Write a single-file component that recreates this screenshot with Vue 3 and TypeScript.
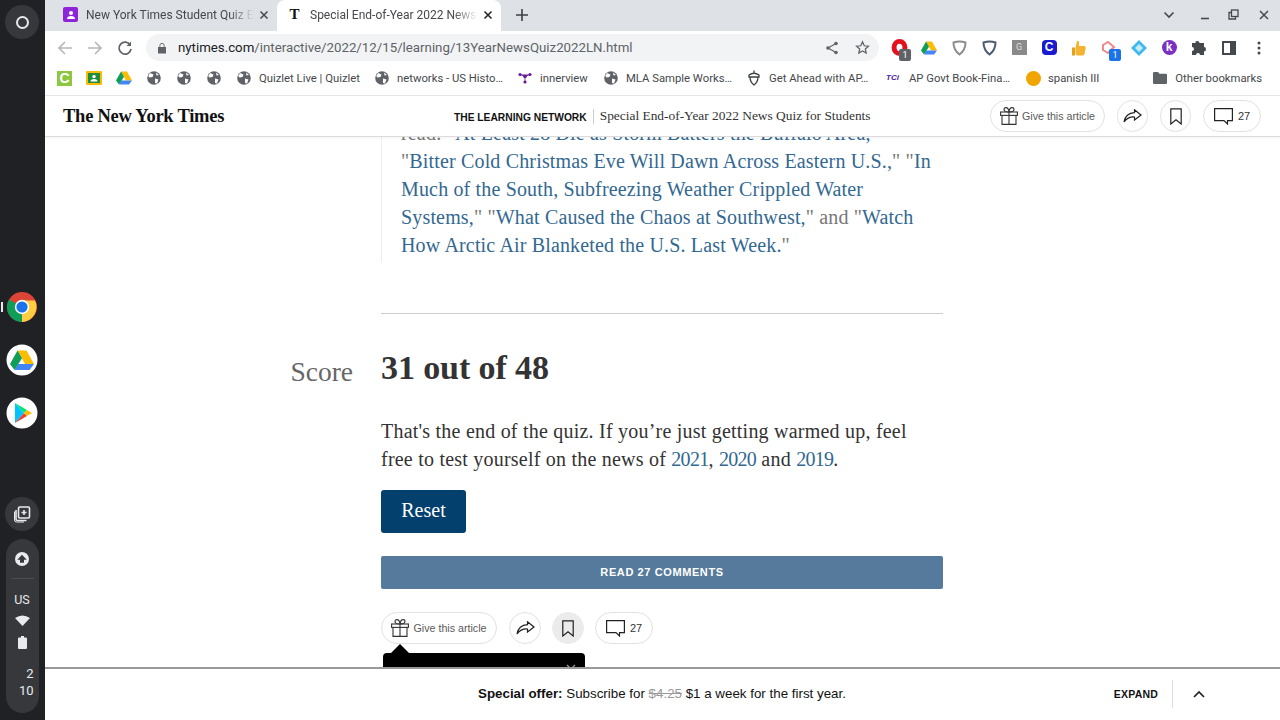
<script setup lang="ts">
const bookmarks = [
  { icon: 'quizlet' },
  { icon: 'classroom' },
  { icon: 'drive' },
  { icon: 'globe' },
  { icon: 'globe' },
  { icon: 'globe' },
  { icon: 'globe', label: 'Quizlet Live | Quizlet', width: 102 },
  { icon: 'globe', label: 'networks - US Histo…', width: 107 },
  { icon: 'dots', label: 'innerview', width: 50 },
  { icon: 'globe', label: 'MLA Sample Works…', width: 107 },
  { icon: 'acorn', label: 'Get Ahead with AP…', width: 104 },
  { icon: 'tci', label: 'AP Govt Book-Fina…', width: 104 },
  { icon: 'orange', label: 'spanish III', width: 52 },
]
</script>

<template>
  <div class="screen">
    <aside class="shelf">
      <div class="launcher"><span class="ring"></span></div>
      <div class="apps">
        <div class="app">
          <span class="running"></span>
          <svg width="32" height="32" viewBox="0 0 32 32">
            <circle cx="16" cy="16" r="15" fill="#db4437" />
            <path d="M3 8.5 A15 15 0 0 0 16 31 L16 16 Z" fill="#0f9d58" />
            <path d="M16 9.5 H29 A15 15 0 0 1 16 31 L16 16 Z" fill="#ffcd40" />
            <circle cx="16" cy="16" r="7.2" fill="#fff" />
            <circle cx="16" cy="16" r="5.6" fill="#1a73e8" />
          </svg>
        </div>
        <div class="app">
          <svg width="32" height="32" viewBox="0 0 32 32">
            <circle cx="16" cy="16" r="15.5" fill="#fff" />
            <path d="M11.5 6.5 H20.5 L28 20 H19 Z" fill="#fbbc04" />
            <path d="M12 20 H28 L23.5 26 H8.5 Z" fill="#4285f4" />
            <path d="M11.5 6.5 L16 14.3 L8.5 26 L4 20 Z" fill="#0f9d58" />
          </svg>
        </div>
        <div class="app">
          <svg width="32" height="32" viewBox="0 0 32 32">
            <circle cx="16" cy="16" r="15.5" fill="#fff" />
            <path d="M9 6 L18 16 L9 26 Z" fill="#00c3ff" />
            <path d="M9 6 L21 13 L18 16 Z" fill="#00e676" />
            <path d="M9 26 L21 19 L18 16 Z" fill="#ea4335" />
            <path d="M21 13 L26 16 L21 19 L18 16 Z" fill="#fbbc04" />
          </svg>
        </div>
      </div>
      <div class="capture">
        <svg width="18" height="18" viewBox="0 0 18 18" fill="none" stroke="#e8eaed" stroke-width="1.6">
          <rect x="5.5" y="2" width="11" height="11" rx="1.2" />
          <path d="M3 5 V14 Q3 15.5 4.5 15.5 H13.5 M11 5 V10 M8.5 7.5 H13.5" />
          <path d="M1.5 6.5 V15 Q1.5 17 3.5 17 H11" stroke-width="1" />
        </svg>
      </div>
      <div class="status">
        <span class="update">
          <svg width="10" height="10" viewBox="0 0 8 8"><path d="M4 .6 L7.8 4.6 H5.6 V7 H2.4 V4.6 H.2 Z" fill="#36383b" /></svg>
        </span>
        <span class="status-rule"></span>
        <span class="ime">US</span>
        <svg width="15" height="11" viewBox="0 0 15 11"><path d="M0 3 Q7.5 -2 15 3 L7.5 11 Z" fill="#e8eaed" /></svg>
        <svg class="battery" width="9" height="13" viewBox="0 0 9 13"><path d="M3 0 H6 V1.5 H8 Q9 1.5 9 2.5 V12 Q9 13 8 13 H1 Q0 13 0 12 V2.5 Q0 1.5 1 1.5 H3 Z" fill="#e8eaed" /></svg>
        <div class="clock"><span>2</span><span>10</span></div>
      </div>
    </aside>

    <div class="window">
      <div class="tabstrip">
        <div class="tab">
          <span class="fav-purple">
            <svg width="10" height="10" viewBox="0 0 10 10" fill="#fff"><circle cx="5" cy="3" r="2" /><path d="M1 9 Q1 6 5 6 Q9 6 9 9 Z" /></svg>
          </span>
          <span class="tab-title">New York Times Student Quiz Ends</span>
          <svg class="tab-close" width="10" height="10" viewBox="0 0 10 10"><path d="M1.5 1.5 L8.5 8.5 M8.5 1.5 L1.5 8.5" stroke="#45484c" stroke-width="1.5" /></svg>
        </div>
        <div class="tab active">
          <span class="fav-t">T</span>
          <span class="tab-title">Special End-of-Year 2022 News Quiz for</span>
          <svg class="tab-close" width="10" height="10" viewBox="0 0 10 10"><path d="M1.5 1.5 L8.5 8.5 M8.5 1.5 L1.5 8.5" stroke="#202124" stroke-width="1.5" /></svg>
        </div>
        <svg class="new-tab" width="12" height="12" viewBox="0 0 12 12"><path d="M6 0 V12 M0 6 H12" stroke="#3c4043" stroke-width="1.6" /></svg>
        <div class="window-controls">
          <svg width="12" height="8" viewBox="0 0 12 8" fill="none"><path d="M1.5 1.5 L6 6 L10.5 1.5" stroke="#45484c" stroke-width="1.6" /></svg>
          <svg class="wc-min" width="10" height="10" viewBox="0 0 10 10"><path d="M1 8.5 H9" stroke="#45484c" stroke-width="1.6" /></svg>
          <svg class="wc-restore" width="11" height="11" viewBox="0 0 11 11" fill="none" stroke="#45484c" stroke-width="1.3"><rect x="3.5" y="1" width="6.5" height="6.5" /><path d="M3.5 3.5 H1 V10 H7.5 V7.5" /></svg>
          <svg class="wc-close" width="10" height="10" viewBox="0 0 10 10"><path d="M1 1 L9 9 M9 1 L1 9" stroke="#45484c" stroke-width="1.5" /></svg>
        </div>
      </div>

      <div class="toolbar">
        <svg class="nav" width="16" height="16" viewBox="0 0 16 16" fill="none" stroke="#b4b7bb" stroke-width="1.6"><path d="M15 8 H2 M8 2 L2 8 L8 14" /></svg>
        <svg class="nav" width="16" height="16" viewBox="0 0 16 16" fill="none" stroke="#b4b7bb" stroke-width="1.6"><path d="M1 8 H14 M8 2 L14 8 L8 14" /></svg>
        <svg class="nav" width="16" height="16" viewBox="0 0 16 16" fill="none" stroke="#5f6368" stroke-width="1.7"><path d="M13.2 5 A6 6 0 1 0 14 9" /><path d="M14 1.5 V6 H9.5 Z" fill="#5f6368" stroke="none" /></svg>
        <div class="omnibox">
          <svg width="10" height="12" viewBox="0 0 10 12"><path d="M2.5 5 V3.5 A2.5 2.5 0 0 1 7.5 3.5 V5 M1 5 H9 V11.5 H1 Z" fill="#5f6368" /><path d="M3.3 5 V3.5 A1.7 1.7 0 0 1 6.7 3.5 V5 Z" fill="#f1f3f4" /></svg>
          <span class="url"><b>nytimes.com</b>/interactive/2022/12/15/learning/13YearNewsQuiz2022LN.html</span>
          <svg class="omni-share" width="14" height="14" viewBox="0 0 14 14" fill="#5f6368" stroke="#5f6368"><path d="M11 2.5 L3 7 L11 11.5" fill="none" stroke-width="1.2" /><circle cx="11" cy="2.5" r="1.8" stroke="none" /><circle cx="3" cy="7" r="1.8" stroke="none" /><circle cx="11" cy="11.5" r="1.8" stroke="none" /></svg>
          <svg width="15" height="15" viewBox="0 0 24 24" fill="none" stroke="#5f6368" stroke-width="2"><path d="M12 3 L14.8 9.2 L21.5 9.9 L16.5 14.4 L17.9 21 L12 17.6 L6.1 21 L7.5 14.4 L2.5 9.9 L9.2 9.2 Z" /></svg>
        </div>
        <div class="extensions">
          <span class="ext">
            <svg width="17" height="19" viewBox="0 0 16 18"><path d="M8 1 A7.5 8 0 1 0 8 17 A7.5 8 0 1 0 8 1 Z M8 5.5 A2.8 3.5 0 1 1 8 12.5 A2.8 3.5 0 1 1 8 5.5 Z" fill="#e5101d" fill-rule="evenodd" /></svg>
            <span class="ext-badge grey">1</span>
          </span>
          <span class="ext">
            <svg width="16" height="14" viewBox="4 6 24 20.5"><path d="M11.5 6.5 H20.5 L28 20 H19 Z" fill="#fbbc04" /><path d="M12 20 H28 L23.5 26 H8.5 Z" fill="#4285f4" /><path d="M11.5 6.5 L16 14.3 L8.5 26 L4 20 Z" fill="#0f9d58" /></svg>
          </span>
          <span class="ext">
            <svg width="15" height="16" viewBox="0 0 15 16" fill="none" stroke="#8a8d90" stroke-width="2"><path d="M1.5 2.5 Q7.5 .5 13.5 2.5 Q13.5 10 7.5 14.5 Q1.5 10 1.5 2.5 Z" /></svg>
          </span>
          <span class="ext">
            <svg width="15" height="16" viewBox="0 0 15 16" fill="none" stroke="#4a5a70" stroke-width="2"><path d="M1.5 2.5 Q7.5 .5 13.5 2.5 Q13.5 10 7.5 14.5 Q1.5 10 1.5 2.5 Z" /></svg>
          </span>
          <span class="ext"><span class="ext-g">G</span></span>
          <span class="ext"><span class="ext-c">C</span></span>
          <span class="ext">
            <svg width="14" height="16" viewBox="0 0 14 16"><path d="M5 1 Q7 0 7 3 V6 H12.5 Q14 6 13.7 8 L12.5 14 Q12.2 15.5 10.5 15.5 H5 L3.5 14 V7.5 Z" fill="#f4b431" /><rect x="0" y="7.5" width="3" height="8" fill="#e89f1c" /></svg>
          </span>
          <span class="ext">
            <svg width="14" height="14" viewBox="0 0 14 14" fill="none" stroke="#f08a8a" stroke-width="2"><path d="M1 4 L6 1 L12 6 L6 12 L1 9 Z" /></svg>
            <span class="ext-badge blue">1</span>
          </span>
          <span class="ext">
            <svg width="16" height="16" viewBox="0 0 16 16"><path d="M8 0 L16 8 L8 16 L0 8 Z" fill="#41b8ee" /><path d="M8 4 L12 8 L8 12 L4 8 Z" fill="#c5ecfb" /></svg>
          </span>
          <span class="ext"><span class="ext-k">k</span></span>
          <span class="ext">
            <svg width="14" height="14" viewBox="0 0 14 14"><path d="M5 0 Q7.5 0 7.5 2 H12 V6 Q14 6 14 8.2 Q14 10.5 12 10.5 V14 H8 Q8 12 6 12 Q4 12 4 14 H0 V10 Q2 10 2 8 Q2 6 0 6 V2 H3.5 Q3 0 5 0 Z" fill="#45484c" /></svg>
          </span>
          <span class="ext">
            <svg width="14" height="14" viewBox="0 0 14 14" fill="none" stroke="#45484c" stroke-width="2"><rect x="1" y="1" width="12" height="12" /><rect x="9" y="1" width="4" height="12" fill="#45484c" /></svg>
          </span>
          <span class="ext">
            <svg width="4" height="14" viewBox="0 0 4 14" fill="#45484c"><circle cx="2" cy="2" r="1.5" /><circle cx="2" cy="7" r="1.5" /><circle cx="2" cy="12" r="1.5" /></svg>
          </span>
        </div>
      </div>

      <div class="bookmarks">
        <div v-for="(b, i) in bookmarks" :key="i" class="bookmark" :class="{ labelled: b.label }">
          <span v-if="b.icon === 'quizlet'" class="bm-quizlet">C</span>
          <svg v-else-if="b.icon === 'classroom'" width="16" height="14" viewBox="0 0 16 14"><rect width="16" height="14" rx="1" fill="#fbbc04" /><rect x="2" y="2" width="12" height="10" fill="#1e8e3e" /><circle cx="8" cy="5.5" r="1.7" fill="#fff" /><path d="M4.5 10.5 Q4.5 8 8 8 Q11.5 8 11.5 10.5 Z" fill="#fff" /></svg>
          <svg v-else-if="b.icon === 'drive'" width="16" height="14" viewBox="4 6 24 20.5"><path d="M11.5 6.5 H20.5 L28 20 H19 Z" fill="#fbbc04" /><path d="M12 20 H28 L23.5 26 H8.5 Z" fill="#4285f4" /><path d="M11.5 6.5 L16 14.3 L8.5 26 L4 20 Z" fill="#0f9d58" /></svg>
          <svg v-else-if="b.icon === 'globe'" width="14" height="14" viewBox="0 0 14 14"><circle cx="7" cy="7" r="6.8" fill="#5f6368" /><path d="M3 2 L6.5 3.5 L5.5 6 L2.5 6.5 L1.2 5 Z M8 7.5 L11.5 8.5 L10 12.5 L8 12 Z M9 1.5 L12 4 L9.5 4.5 Z" fill="#fff" /></svg>
          <svg v-else-if="b.icon === 'dots'" width="14" height="12" viewBox="0 0 14 12" fill="#6a1b9a"><circle cx="2" cy="2.5" r="1.6" /><circle cx="12" cy="2.5" r="1.6" /><circle cx="7" cy="4.5" r="1.8" /><circle cx="7" cy="10" r="1.6" /><path d="M2 2.5 L7 4.5 L12 2.5 M7 4.5 V10" stroke="#6a1b9a" stroke-width=".8" /></svg>
          <svg v-else-if="b.icon === 'acorn'" width="12" height="16" viewBox="0 0 12 16" fill="none" stroke="#3c4043" stroke-width="1.3"><path d="M6 .5 V3 M1 5 Q6 1.5 11 5 V7 H1 Z M2 7 Q2 12 6 15 Q10 12 10 7" /></svg>
          <span v-else-if="b.icon === 'tci'" class="bm-tci">TCi</span>
          <span v-else class="bm-orange"></span>
          <span v-if="b.label" :style="{ width: b.width + 'px' }">{{ b.label }}</span>
        </div>
        <div class="bookmark other">
          <svg width="14" height="12" viewBox="0 0 14 12"><path d="M0 1.2 Q0 0 1.2 0 H5 L6.5 1.8 H12.8 Q14 1.8 14 3 V10.8 Q14 12 12.8 12 H1.2 Q0 12 0 10.8 Z" fill="#5f6368" /></svg>
          <span>Other bookmarks</span>
        </div>
      </div>

      <header class="nyt-bar">
        <span class="nyt-logo">The New York Times</span>
        <div class="nyt-title">
          <span class="kicker">THE LEARNING NETWORK</span>
          <span class="nyt-sep"></span>
          <span class="headline">Special End-of-Year 2022 News Quiz for Students</span>
        </div>
        <div class="actions top-actions">
          <button class="pill gift">
            <svg width="18" height="18" viewBox="0 0 18 18" fill="none" stroke="#333" stroke-width="1.1"><rect x=".6" y="5" width="16.8" height="3.4" /><path d="M2 8.4 V17.4 H16 V8.4 M9 5 V17.4 M9 5 Q4 5 4 2.5 Q4 .6 6 .6 Q8.5 .6 9 5 Q9.5 .6 12 .6 Q14 .6 14 2.5 Q14 5 9 5" /></svg>
            <span>Give this article</span>
          </button>
          <button class="pill round">
            <svg width="19" height="14" viewBox="0 0 19 14" fill="none" stroke="#222" stroke-width="1.2"><path d="M11.5 .8 L18 6 L11.5 11 V8 Q5 7.5 1 13 Q2.5 4 11.5 3.6 Z" /></svg>
          </button>
          <button class="pill round">
            <svg width="12" height="17" viewBox="0 0 12 17" fill="none" stroke="#222" stroke-width="1.2"><path d="M.8 .8 H11.2 V16 L6 11.8 L.8 16 Z" /></svg>
          </button>
          <button class="pill comments">
            <svg width="19" height="17" viewBox="0 0 19 17" fill="none" stroke="#222" stroke-width="1.2"><path d="M.6 .6 H18.4 V12.6 H13.5 V16 L10 12.6 H.6 Z" /></svg>
            <span>27</span>
          </button>
        </div>
      </header>

      <main class="page">
        <div class="article">
          <div class="note">
            <p>
              read: "<a>At Least 28 Die as Storm Batters the Buffalo Area,</a>"
              "<a>Bitter Cold Christmas Eve Will Dawn Across Eastern U.S.,</a>" "<a>In Much of the South, Subfreezing Weather Crippled Water Systems,</a>" "<a>What Caused the Chaos at Southwest,</a>" and "<a>Watch How Arctic Air Blanketed the U.S. Last Week.</a>"
            </p>
          </div>
          <hr class="rule" />
          <div class="score-label">Score</div>
          <h2 class="score">31 out of 48</h2>
          <p class="outro">That's the end of the quiz. If you’re just getting warmed up, feel free to test yourself on the news of <a>2021</a>, <a>2020</a> and <a>2019</a>.</p>
          <button class="reset">Reset</button>
          <button class="read-comments">READ 27 COMMENTS</button>
          <div class="actions bottom-actions">
            <button class="pill gift">
              <svg width="18" height="18" viewBox="0 0 18 18" fill="none" stroke="#333" stroke-width="1.1"><rect x=".6" y="5" width="16.8" height="3.4" /><path d="M2 8.4 V17.4 H16 V8.4 M9 5 V17.4 M9 5 Q4 5 4 2.5 Q4 .6 6 .6 Q8.5 .6 9 5 Q9.5 .6 12 .6 Q14 .6 14 2.5 Q14 5 9 5" /></svg>
              <span>Give this article</span>
            </button>
            <button class="pill round">
              <svg width="19" height="14" viewBox="0 0 19 14" fill="none" stroke="#222" stroke-width="1.2"><path d="M11.5 .8 L18 6 L11.5 11 V8 Q5 7.5 1 13 Q2.5 4 11.5 3.6 Z" /></svg>
            </button>
            <button class="pill round saved">
              <svg width="12" height="17" viewBox="0 0 12 17" fill="none" stroke="#222" stroke-width="1.2"><path d="M.8 .8 H11.2 V16 L6 11.8 L.8 16 Z" /></svg>
            </button>
            <button class="pill comments">
              <svg width="19" height="17" viewBox="0 0 19 17" fill="none" stroke="#222" stroke-width="1.2"><path d="M.6 .6 H18.4 V12.6 H13.5 V16 L10 12.6 H.6 Z" /></svg>
              <span>27</span>
            </button>
            <div class="tooltip">
              <svg class="tooltip-x" width="10" height="10" viewBox="0 0 10 10"><path d="M1 1 L9 9 M9 1 L1 9" stroke="#999" stroke-width="1.3" /></svg>
            </div>
          </div>
        </div>
      </main>

      <footer class="offer">
        <p class="offer-text"><b>Special offer:</b> Subscribe for <s>$4.25</s> $1 a week for the first year.</p>
        <span class="expand">EXPAND</span>
        <span class="offer-sep"></span>
        <svg class="offer-chevron" width="12" height="8" viewBox="0 0 12 8" fill="none"><path d="M1 7 L6 2 L11 7" stroke="#222" stroke-width="1.7" /></svg>
      </footer>
    </div>
  </div>
</template>

<style>
html, body { margin: 0; overflow: hidden; }
</style>

<style scoped>
.screen {
  display: flex;
  width: 1280px;
  height: 720px;
  overflow: hidden;
  background: #fff;
  font-family: Roboto, "Liberation Sans", sans-serif;
}

/* chromeos shelf */
.shelf {
  width: 45px;
  flex: none;
  background: #202124;
  display: flex;
  flex-direction: column;
  align-items: center;
  padding: 5px 1px 0 0;
  box-sizing: border-box;
}
.launcher, .capture {
  width: 34px;
  height: 34px;
  border-radius: 50%;
  background: #36383b;
  display: flex;
  align-items: center;
  justify-content: center;
  flex: none;
}
.ring {
  width: 9px;
  height: 9px;
  border: 2px solid #e8eaed;
  border-radius: 50%;
}
.apps {
  margin-top: 252px;
  display: flex;
  flex-direction: column;
  gap: 21px;
}
.app { position: relative; height: 32px; width: 32px; }
.app svg { display: block; }
.running {
  position: absolute;
  left: -5px;
  top: 11px;
  width: 2px;
  height: 10px;
  background: #e8eaed;
}
.capture { margin-top: 68px; }
.status {
  margin-top: 8px;
  width: 33px;
  height: 174px;
  background: #36383b;
  border-radius: 17px;
  display: flex;
  flex-direction: column;
  align-items: center;
  color: #e8eaed;
  font-size: 12px;
  padding-top: 13px;
  box-sizing: border-box;
}
.update {
  width: 14px;
  height: 14px;
  border-radius: 50%;
  background: #e8eaed;
  display: flex;
  align-items: center;
  justify-content: center;
}
.status-rule {
  width: 23px;
  height: 1px;
  background: #4a4c50;
  margin: 12px 0 13px;
}
.ime { line-height: 16px; margin-bottom: 7px; font-size: 12.5px; }
.battery { margin-top: 10px; }
.clock {
  margin-top: 16px;
  width: 100%;
  padding-right: 5px;
  box-sizing: border-box;
  display: flex;
  flex-direction: column;
  align-items: flex-end;
  line-height: 17px;
  font-size: 13px;
}

.window {
  flex: 1;
  min-width: 0;
  display: flex;
  flex-direction: column;
}

/* tabs */
.tabstrip {
  height: 31px;
  flex: none;
  background: #dee1e6;
  display: flex;
  align-items: flex-end;
  padding-left: 8px;
}
.tab {
  width: 224px;
  height: 31px;
  box-sizing: border-box;
  display: flex;
  align-items: center;
  padding: 0 8px 2px 10px;
  font-size: 12px;
  color: #45484c;
  flex: none;
}
.tab.active {
  background: #fff;
  border-radius: 8px 8px 0 0;
}
.tab-title {
  flex: 1;
  min-width: 0;
  margin: 0 5px 0 8px;
  white-space: nowrap;
  overflow: hidden;
  -webkit-mask-image: linear-gradient(to right, #000 85%, transparent 100%);
  mask-image: linear-gradient(to right, #000 85%, transparent 100%);
}
.tab-close { flex: none; }
.fav-purple {
  width: 15px;
  height: 15px;
  border-radius: 2px;
  background: #8e24d8;
  display: flex;
  align-items: center;
  justify-content: center;
  flex: none;
}
.fav-t {
  width: 15px;
  height: 15px;
  flex: none;
  text-align: center;
  font: bold 15px/15px "Liberation Serif", serif;
  color: #111;
}
.new-tab { margin: 0 0 10px 15px; flex: none; }
.window-controls {
  margin-left: auto;
  width: 117px;
  height: 31px;
  display: flex;
  align-items: center;
  padding-bottom: 2px;
  box-sizing: border-box;
  flex: none;
}
.wc-min { margin-left: 25px; }
.wc-restore { margin-left: 18px; }
.wc-close { margin-left: 20px; }

/* toolbar */
.toolbar {
  height: 33px;
  flex: none;
  background: #fff;
  display: flex;
  align-items: center;
  padding-left: 12px;
  gap: 14px;
}
.nav { flex: none; }
.omnibox {
  width: 733px;
  height: 27px;
  box-sizing: border-box;
  border-radius: 14px;
  background: #f1f3f4;
  margin-left: -1px;
  display: flex;
  align-items: center;
  padding: 0 9px 0 11px;
  flex: none;
}
.url {
  margin-left: 11px;
  flex: 1;
  font-size: 13.27px;
  color: #5f6368;
  white-space: nowrap;
}
.url b { font-weight: 400; color: #202124; }
.omni-share { margin-right: 16px; }
.extensions {
  display: flex;
  margin-left: -9px;
}
.ext {
  position: relative;
  width: 30px;
  height: 24px;
  display: flex;
  align-items: center;
  justify-content: center;
  flex: none;
}
.ext-badge {
  position: absolute;
  left: 15px;
  top: 13px;
  width: 12px;
  height: 12px;
  border-radius: 2px;
  font-size: 9px;
  line-height: 12px;
  text-align: center;
  color: #fff;
}
.ext-badge.grey { background: #5f6368; }
.ext-badge.blue { background: #1a73e8; }
.ext-g {
  width: 15px;
  height: 15px;
  background: #8a8a8a;
  color: #ddd;
  font-size: 9px;
  line-height: 15px;
  text-align: center;
}
.ext-c {
  width: 15px;
  height: 15px;
  background: #1a1ad0;
  border-radius: 4px;
  color: #fff;
  font: bold 12px/15px "Liberation Sans", sans-serif;
  text-align: center;
}
.ext-k {
  width: 15px;
  height: 15px;
  border-radius: 50%;
  background: #7b2fc4;
  color: #fff;
  font: bold 12px/14px "Liberation Sans", sans-serif;
  text-align: center;
}

/* bookmarks */
.bookmarks {
  height: 32px;
  flex: none;
  box-sizing: border-box;
  border-bottom: 1px solid #e4e5e7;
  display: flex;
  align-items: center;
  padding: 0 0 3px 12px;
  gap: 14px;
  font-size: 11.3px;
  color: #45484c;
  white-space: nowrap;
}
.bookmark {
  display: flex;
  align-items: center;
  gap: 7px;
  flex: none;
}
.bookmark.labelled { margin-right: -1px; }
.bookmark > svg { width: 16px; flex: none; }
.other { margin-left: auto; margin-right: 18px; }
.bm-quizlet {
  width: 15px;
  height: 15px;
  background: #8dc63f;
  color: #fff;
  font: bold 14px/15px "Liberation Sans", sans-serif;
  text-align: center;
}
.bm-tci {
  width: 16px;
  font: italic bold 8px/10px "Liberation Sans", sans-serif;
  color: #4a1a9e;
}
.bm-orange {
  width: 15px;
  height: 15px;
  border-radius: 50%;
  background: #f0a500;
}

/* nyt header */
.nyt-bar {
  height: 41px;
  flex: none;
  box-sizing: border-box;
  background: #fff;
  border-bottom: 1px solid #dcdcdc;
  display: flex;
  align-items: center;
  padding-left: 18px;
  position: relative;
  z-index: 2;
  box-shadow: 0 1px 2px rgba(0, 0, 0, .05);
}
.nyt-logo {
  width: 160px;
  flex: none;
  font: bold 18.5px/24px "Liberation Serif", serif;
  color: #111;
  white-space: nowrap;
  letter-spacing: -.25px;
}
.nyt-title {
  display: flex;
  align-items: center;
  margin-left: 231px;
  white-space: nowrap;
}
.kicker {
  font: bold 10.25px "Liberation Sans", sans-serif;
  color: #121212;
  padding-top: 2px;
}
.nyt-sep {
  width: 1px;
  height: 15px;
  background: #ccc;
  margin: 0 6px;
}
.headline {
  font: 13.4px "Liberation Serif", serif;
  color: #333;
}
.actions { display: flex; align-items: center; }
.top-actions { margin-left: auto; margin-right: 19px; gap: 12px; }
.top-actions .gift { width: 115px; }
.top-actions .round { width: 31px; }
.bottom-actions { position: relative; gap: 11px; grid-column: 2; margin-top: 23px; }
.bottom-actions .gift { margin-right: 1px; }
.pill {
  height: 32px;
  box-sizing: border-box;
  border: 1px solid #e2e2e2;
  border-radius: 16px;
  background: #fff;
  padding: 0;
  display: flex;
  align-items: center;
  justify-content: center;
  font-family: "Liberation Sans", sans-serif;
  flex: none;
}
.gift { width: 116px; gap: 4px; font-size: 10.7px; color: #5a5a5a; }
.round { width: 32px; }
.saved { background: #ebebeb; border-color: #ebebeb; }
.comments { width: 58px; gap: 5px; font-size: 11px; color: #333; }

/* article */
.page {
  flex: 1;
  min-height: 0;
  overflow: hidden;
}
.article {
  display: grid;
  grid-template-columns: 336px 562px;
  font-family: "Liberation Serif", serif;
  margin-top: -18px;
}
.note {
  grid-column: 2;
  border-left: 1px solid #eee;
  padding: 0 8px 3px 19px;
}
.note p {
  margin: 0;
  font-size: 20px;
  line-height: 28px;
  letter-spacing: .16px;
  color: #777;
}
a { color: #326891; }
.rule {
  grid-column: 2;
  width: 100%;
  margin: 51px 0 0;
  border: none;
  border-top: 1px solid #ccc;
}
.score-label {
  grid-column: 1;
  text-align: right;
  padding: 41px 28px 0 0;
  font-size: 27.5px;
  line-height: 34px;
  color: #666;
}
.score {
  grid-column: 2;
  margin: 34px 0 0;
  font-size: 34px;
  line-height: 40px;
  letter-spacing: -.1px;
  color: #333;
}
.outro {
  grid-column: 2;
  margin: 28px 0 0;
  font-size: 20px;
  line-height: 28px;
  letter-spacing: .22px;
  color: #333;
}
.outro a { letter-spacing: -.7px; }
.reset {
  grid-column: 2;
  justify-self: start;
  margin-top: 17px;
  width: 85px;
  height: 43px;
  border: none;
  border-radius: 3px;
  background: #03406d;
  color: #fff;
  font: 20px "Liberation Serif", serif;
  padding: 0 0 3px;
}
.read-comments {
  grid-column: 2;
  margin-top: 23px;
  height: 33px;
  border: none;
  border-radius: 2px;
  background: #557a9b;
  color: #fff;
  font: bold 11px "Liberation Sans", sans-serif;
  letter-spacing: .6px;
  padding: 0 0 2px;
}
.tooltip {
  position: absolute;
  left: 2px;
  top: 41px;
  width: 202px;
  height: 60px;
  background: #000;
  border-radius: 4px;
}
.tooltip::before {
  content: "";
  position: absolute;
  left: 7px;
  top: -9px;
  border: 10px solid transparent;
  border-top: none;
  border-bottom: 10px solid #000;
}
.tooltip-x { position: absolute; right: 9px; top: 11px; }

/* offer bar */
.offer {
  height: 53px;
  flex: none;
  box-sizing: border-box;
  border-top: 2px solid #999;
  background: #fff;
  display: flex;
  align-items: center;
  padding-bottom: 2px;
  position: relative;
  z-index: 2;
  font-family: "Liberation Sans", sans-serif;
  color: #121212;
}
.offer-text {
  margin: 0 0 0 433px;
  font-size: 13.35px;
  white-space: nowrap;
}
.offer-text s { color: #999; }
.expand {
  margin-left: auto;
  font-size: 10.5px;
  font-weight: 700;
  letter-spacing: .2px;
}
.offer-sep {
  width: 1px;
  height: 28px;
  background: #ddd;
  margin: 0 20px 0 14px;
}
.offer-chevron { margin-right: 75px; }
</style>
